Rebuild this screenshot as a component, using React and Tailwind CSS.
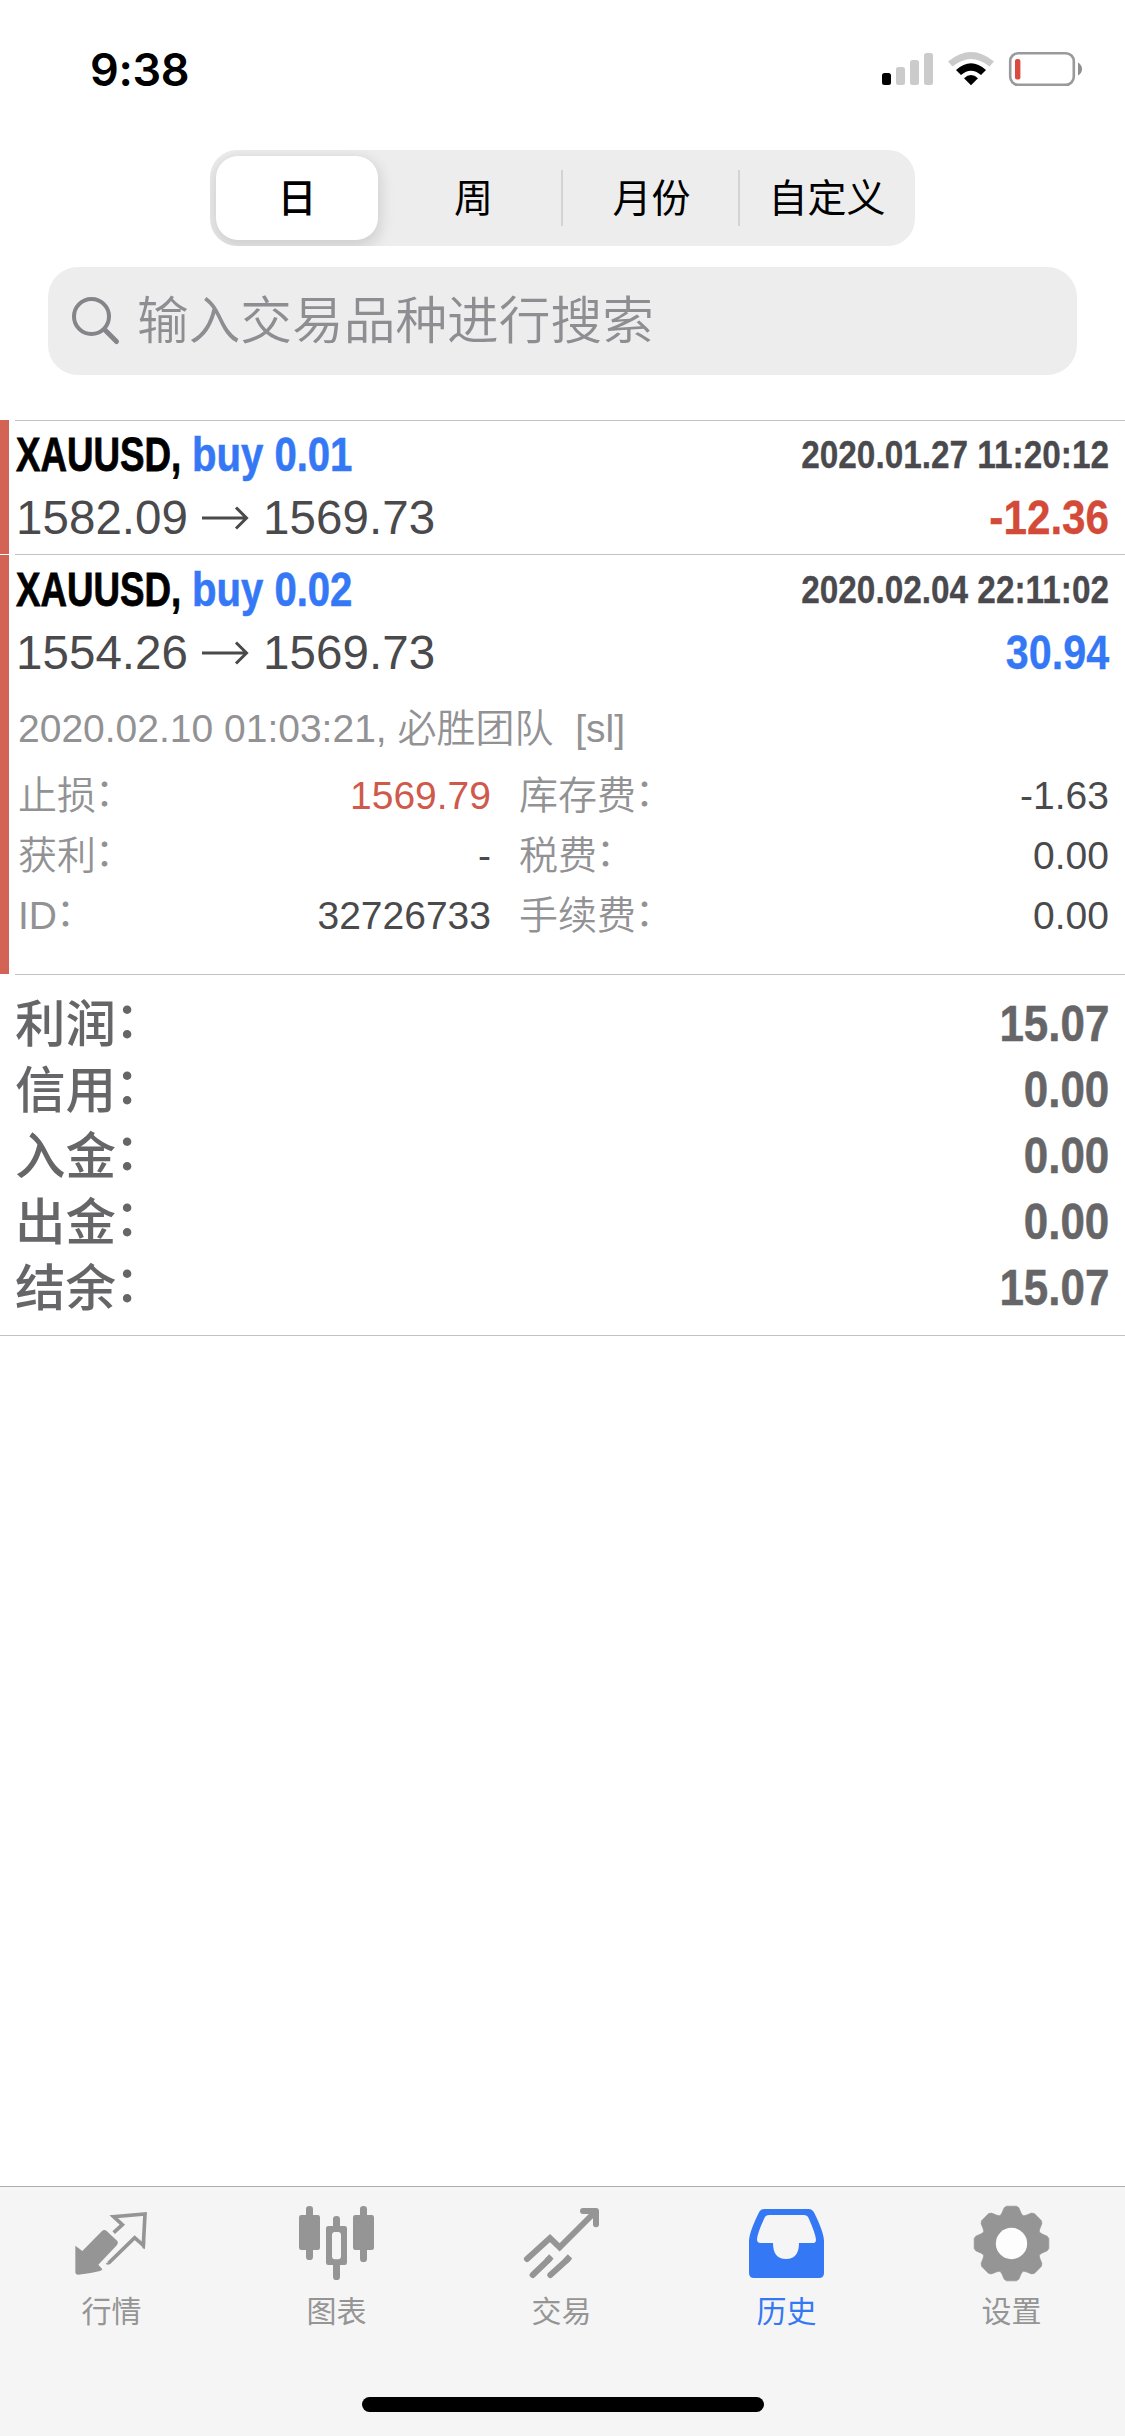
import React from "react";

const SANS = "font-['Liberation_Sans','Noto_Sans_CJK_SC',sans-serif]";

function StatusBar() {
  return (
    <div className="flex h-[150px] items-start justify-between pl-[90px] pr-[42px] pt-[39px]">
      <span className="font-['Inter',sans-serif] text-[45px] font-semibold leading-[62px] tracking-[-0.3px] text-black">
        9:38
      </span>
      <svg width="203" height="40" viewBox="880 48 203 40" className="mt-[9px]">
        <rect x="882" y="73" width="9" height="12" rx="2.5" fill="#000" />
        <rect x="896" y="67" width="9" height="18" rx="2.5" fill="#cbcbcb" />
        <rect x="910" y="60" width="9" height="25" rx="2.5" fill="#cbcbcb" />
        <rect x="924" y="53" width="9" height="32" rx="2.5" fill="#cbcbcb" />
        <path d="M948 61.5 Q971 42.500 994 61.500 L989.500 66.500 Q971 51.500 952.500 66.500 Z" fill="#cbcbcb" />
        <path d="M956 70 Q971 56.500 986 70 L981 75 Q971 66.500 961 75 Z" fill="#000" />
        <path d="M964 78.200 Q971 71.800 978 78.200 L971 85.200 Z" fill="#000" />
        <rect x="1010.200" y="53.200" width="63.600" height="31.600" rx="8" fill="none" stroke="#9a9a9c" strokeWidth="2.600" />
        <rect x="1015" y="59" width="5.400" height="20.500" rx="2" fill="#dc4b40" />
        <path d="M1078 62.500 Q1082 65 1082 69 Q1082 73 1078 75.500 Z" fill="#8f8f91" />
      </svg>
    </div>
  );
}

function Segments() {
  return (
    <div className="mx-auto flex h-24 w-[705px] items-center overflow-hidden rounded-[27px] bg-[#ededee] pl-1.5 text-[39px] text-black">
      <div className="flex h-[84px] w-[162px] items-center justify-center rounded-[22px] bg-white pt-0.5 font-medium shadow-[0_5px_14px_3px_rgba(0,0,0,0.12)]">
        日
      </div>
      <div className="flex h-14 w-[185px] items-center justify-center border-r-2 border-[#d3d3d5] pl-2 pt-0.5">
        周
      </div>
      <div className="flex h-14 w-[177px] items-center justify-center border-r-2 border-[#d3d3d5] pl-0.5 pt-0.5">
        月份
      </div>
      <div className="flex flex-1 items-center justify-center pr-px pt-0.5">自定义</div>
    </div>
  );
}

function SearchBox() {
  return (
    <div className="mx-12 mt-[21px] flex h-[108px] items-center rounded-[30px] bg-[#ededee] pl-[23px] text-[#8e8e92]">
      <svg width="50" height="50" viewBox="0 0 50 50" fill="none" stroke="#858589" strokeLinecap="round">
        <circle cx="20.500" cy="20.500" r="17.500" strokeWidth="4" />
        <path d="M34 34 L45.500 45.500" strokeWidth="5" />
      </svg>
      <span className="ml-4 pt-px text-[51.700px] font-[350]">输入交易品种进行搜索</span>
    </div>
  );
}

function Label({ text }) {
  return (
    <>
      {text}
      <span className="inline-block translate-x-[-0.03em] translate-y-[-0.08em]">：</span>
    </>
  );
}

function Deal({ volume, from, to, time, profit, profitColor, first, children }) {
  return (
    <div className="flex">
      <div className={first ? "w-[9px] bg-[#d36354]" : "mt-px w-[9px] bg-[#d36354]"} />
      <div className="ml-1.5 flex-1 border-t border-[#c3c3c5] pr-4">
        <div className={"flex h-16 justify-between whitespace-nowrap font-bold leading-[64px] " + (first ? "mt-0.5" : "mt-[3px]")}>
          <div className="flex pl-px text-[48px]">
            <div className="w-[176px] text-black">
              <span className="inline-block origin-left scale-x-[0.765] [-webkit-text-stroke:0.8px]">XAUUSD,</span>
            </div>
            <div className="text-[#3478f6]">
              <span className="inline-block origin-left scale-x-[0.835] [-webkit-text-stroke:0.6px]">buy {volume}</span>
            </div>
          </div>
          <span className="origin-right scale-x-[0.855] text-[39px] text-[#4a4a4e] [-webkit-text-stroke:0.3px]">{time}</span>
        </div>
        <div className="-mt-px flex h-16 justify-between leading-[64px]">
          <div className="flex items-center pl-px text-[47.500px] tracking-[0.050px] text-[#4a4a4d]">
            <span>{from}</span>
            <svg width="48" height="24" viewBox="0 0 48 24" className="ml-[13px] mr-[14px]" fill="none" stroke="currentColor" strokeWidth="3">
              <path d="M1 12 H45 M35 1.500 L45.500 12 L35 22.500" />
            </svg>
            <span>{to}</span>
          </div>
          <span className={"origin-right text-[48px] font-bold [-webkit-text-stroke:0.3px] " + profitColor}>
            {profit}
          </span>
        </div>
        {children || <div className="h-1" />}
      </div>
    </div>
  );
}

const DETAILS = [
  ["止损", "1569.79", "text-[#cf5a4c]", "库存费", "-1.63"],
  ["获利", "-", "text-[#4a4a4d]", "税费", "0.00"],
  ["ID", "32726733", "text-[#4a4a4d]", "手续费", "0.00"],
];

const SUMMARY = [
  ["利润", "15.07"],
  ["信用", "0.00"],
  ["入金", "0.00"],
  ["出金", "0.00"],
  ["结余", "15.07"],
];

function DealDetails() {
  return (
    <div className="pb-[28px] pl-[3px] pt-[14px] text-[39px] font-[350] leading-[60px] text-[#929294]">
      <div className="mb-[7px] whitespace-pre">2020.02.10 01:03:21, 必胜团队  [sl]</div>
      {DETAILS.map(([label, value, color, label2, value2]) => (
        <div key={label} className="flex h-[60px]">
          <div className="flex w-[473px] justify-between">
            <span><Label text={label} /></span>
            <span className={color}>{value}</span>
          </div>
          <div className="ml-[28px] flex flex-1 justify-between">
            <span><Label text={label2} /></span>
            <span className="text-[#4a4a4d]">{value2}</span>
          </div>
        </div>
      ))}
    </div>
  );
}

function Summary() {
  return (
    <div className="h-[362px] border-b border-[#c3c3c5]">
      <div className="ml-[15px] border-t border-[#c3c3c5] pr-4 pt-4">
        {SUMMARY.map(([label, value]) => (
          <div key={label} className="flex h-[66px] justify-between text-[50.500px] leading-[66px] text-[#666668]">
            <span className="pt-px font-medium"><Label text={label} /></span>
            <span className="origin-right scale-x-[0.87] font-bold [-webkit-text-stroke:0.5px]">{value}</span>
          </div>
        ))}
      </div>
    </div>
  );
}

const TOOTH = [
  [-33, 85], [-29, 91], [-22, 107], [-15, 112],
  [15, 112], [22, 107], [29, 91], [33, 85],
];

function gearPath(cx, cy) {
  const pts = [];
  for (let i = 0; i < 8; i++) {
    const a = (i * Math.PI) / 4;
    for (const [x, y] of TOOTH) {
      pts.push([
        cx + x * Math.cos(a) + y * Math.sin(a),
        cy + x * Math.sin(a) - y * Math.cos(a),
      ]);
    }
  }
  return "M" + pts.map((p) => p[0].toFixed(1) + " " + p[1].toFixed(1)).join("L") + "Z";
}

function TabIcon({ viewBox, children }) {
  return (
    <svg width="75" height="75" viewBox={viewBox} className="mt-[19px] overflow-visible">
      {children}
    </svg>
  );
}

function Tab({ label, active, viewBox, children }) {
  return (
    <div className={"flex w-[225px] flex-col items-center pr-0.5 " + (active ? "text-[#3478f6]" : "text-[#959595]")}>
      <TabIcon viewBox={viewBox}>{children}</TabIcon>
      <span className="mt-[11px] text-[30px] leading-[40px]">{label}</span>
    </div>
  );
}

function TabBar() {
  return (
    <nav className="h-[250px] border-t border-[#aeaeb0] bg-[#f5f5f5]">
      <div className="flex h-[210px]">
        <Tab label="行情" viewBox="222 108 225 225">
          <path
            fill="currentColor"
            d="M226 227 L247 243 L306 183 Q313 177 320 183 L352 213 Q356 219 351 225 L295 284 L307 298 Q305 302 300 303 Q270 311 235 314 Q226 314 226 306 Z"
          />
          <path fill="none" stroke="currentColor" strokeWidth="11" d="M341 188 L367 164 L341 140 L435 132 L430 226 L404 203 L326 279" />
          <path fill="currentColor" d="M333 135 L345 135 L350 146 L342 147 Z M424 224 L436 218 L434 234 L429 236 Z M318 279 L333 275 L330 283 L320 284 Z" />
        </Tab>
        <Tab label="图表" viewBox="897 108 225 225">
          <g fill="currentColor">
            <rect x="918" y="108" width="21" height="162" rx="10" />
            <rect x="897" y="135" width="63" height="105" rx="7" />
            <rect x="999" y="138" width="21" height="40" rx="10" />
            <rect x="999" y="275" width="21" height="55" rx="10" />
            <path fillRule="evenodd" d="M985 168H1034Q1041 168 1041 175V278Q1041 285 1034 285H985Q978 285 978 278V175Q978 168 985 168Z M1004 186Q996 187 996 195V259Q996 267 1004 268H1015Q1023 267 1023 259V195Q1023 187 1015 186Z" />
            <rect x="1080" y="108" width="21" height="168" rx="10" />
            <rect x="1059" y="135" width="63" height="105" rx="7" />
          </g>
        </Tab>
        <Tab label="交易" viewBox="372 108 225 225">
          <g fill="none" stroke="currentColor" strokeWidth="18" strokeLinecap="round">
            <path d="M381 267 L450 204 L479 232 L585 126" />
            <path d="M549 123 H588 V163" strokeLinejoin="round" />
            <path d="M398 315 L448 267 M451 315 L504 267" />
          </g>
          <path stroke="currentColor" strokeWidth="18" d="M440 274 L454 259 M496 274 L510 259" />
        </Tab>
        <Tab label="历史" active viewBox="72 108 225 225">
          <path
            fill="currentColor"
            fillRule="evenodd"
            d="M118 117 H251 Q262 117 268 129 Q297 188 297 214 V309 Q297 324 282 324 H87 Q72 324 72 309 V214 Q72 188 101 129 Q107 117 118 117 Z M133 135 Q122 135 118 145 Q97 190 96 208 Q96 219 106 219 H144 Q144 267 183 267 Q222 267 222 219 H263 Q273 219 273 209 Q271 190 251 145 Q247 135 236 135 Z"
          />
        </Tab>
        <Tab label="设置" viewBox="747 108 225 225">
          <path fill="currentColor" stroke="currentColor" strokeLinejoin="round" strokeWidth="2" d={gearPath(859.5, 220.5)} />
          <circle cx="859.5" cy="220.5" r="47" fill="#fdfdfd" />
        </Tab>
      </div>
      <div className="ml-[362px] h-[15px] w-[402px] rounded-full bg-black" />
    </nav>
  );
}

export default function App() {
  return (
    <div className={"flex h-[2436px] w-[1125px] flex-col overflow-hidden bg-white " + SANS}>
      <StatusBar />
      <Segments />
      <SearchBox />
      <div className="mt-[45px]">
        <Deal first volume="0.01" from="1582.09" to="1569.73" time="2020.01.27 11:20:12" profit="-12.36" profitColor="scale-x-[0.88] text-[#d44a38]" />
        <Deal volume="0.02" from="1554.26" to="1569.73" time="2020.02.04 22:11:02" profit="30.94" profitColor="scale-x-[0.86] text-[#3478f6]">
          <DealDetails />
        </Deal>
        <Summary />
      </div>
      <div className="flex-1" />
      <TabBar />
    </div>
  );
}
